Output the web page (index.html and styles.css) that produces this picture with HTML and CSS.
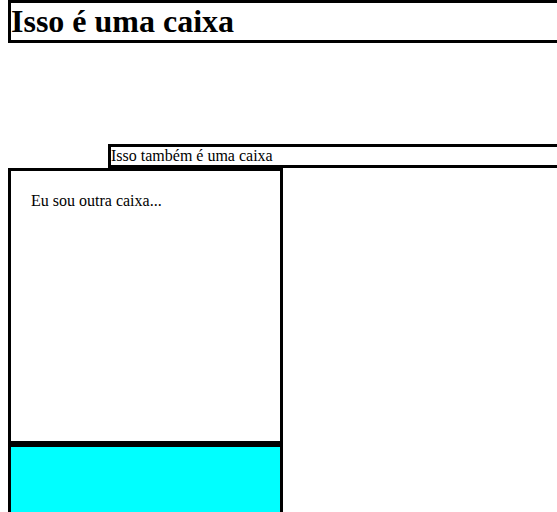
FILE: index.html
```html
<!DOCTYPE html>
<html lang="pt">
<head>
<meta charset="utf-8">
<title>Caixas</title>
<link rel="stylesheet" href="styles.css">
</head>
<body>
<div class="pagina">
  <h1 class="caixa-titulo">Isso é uma caixa</h1>
  <div class="caixa-tambem">Isso também é uma caixa</div>
  <div class="caixa-outra">Eu sou outra caixa...</div>
  <div class="caixa-ciano"></div>
</div>
</body>
</html>
```
FILE: styles.css
```css
body {
  margin: 0;
  font-family: "Liberation Serif", "Times New Roman", serif;
  font-size: 16px;
  color: #000;
  background: #fff;
}
.pagina {
  height: 512px;
  padding-left: 8px;
  overflow: hidden;
}
.caixa-titulo {
  margin: 0 -30px 0 0;
  border: 3px solid #000;
  font-size: 32px;
  font-weight: bold;
  line-height: 37px;
}
.caixa-tambem {
  margin: 101px -30px 0 100px;
  border: 3px solid #000;
  line-height: 18px;
}
.caixa-outra {
  box-sizing: border-box;
  width: 275px;
  height: 276px;
  padding: 21px 20px 0;
  border: 3px solid #000;
  line-height: 18px;
}
.caixa-ciano {
  box-sizing: border-box;
  width: 275px;
  height: 80px;
  border: 3px solid #000;
  background: #00ffff;
}
```
